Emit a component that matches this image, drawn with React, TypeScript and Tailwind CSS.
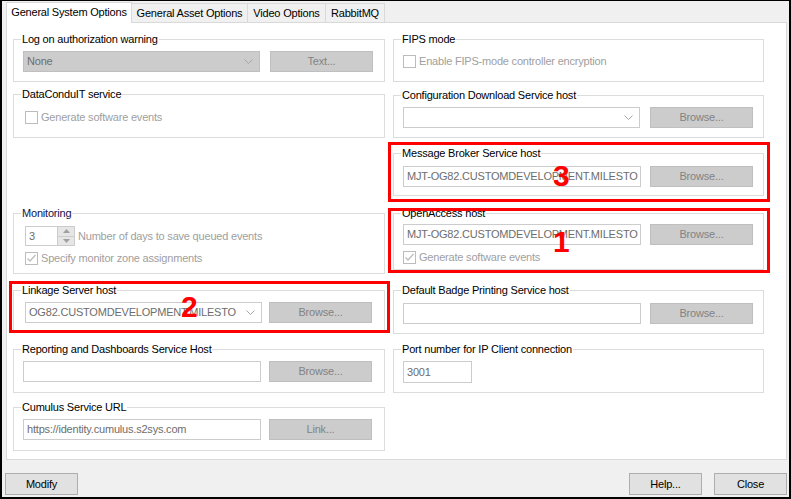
import React from "react";

const FONT = "font-['Liberation_Sans',Arial,sans-serif] text-[11px] tracking-[-0.2px]";

function Group({
  label,
  className = "",
  children,
  labelClass = "text-black",
}: {
  label: string;
  className?: string;
  children?: React.ReactNode;
  labelClass?: string;
}) {
  return (
    <div className={`relative border border-[#dcdcdc] ${className}`}>
      <span className={`absolute left-[7px] top-[-8px] bg-white px-[1px] leading-[14px] whitespace-nowrap ${labelClass}`}>
        {label}
      </span>
      {children}
    </div>
  );
}

function Chevron() {
  return (
    <svg width="9" height="5" viewBox="0 0 9 5" className="shrink-0">
      <polyline points="0.5,0.5 4.5,4.5 8.5,0.5" fill="none" stroke="#a6a6a6" strokeWidth="1" />
    </svg>
  );
}

function Combo({ value, gray = false, w = "w-[237px]" }: { value: string; gray?: boolean; w?: string }) {
  return (
    <div
      className={`${w} h-[21px] flex items-center justify-between pl-[3px] pr-[6px] border ${
        gray ? "bg-[#cccccc] border-[#bfbfbf]" : "bg-white border-[#cccccc]"
      }`}
    >
      <span className="text-[#6d6d6d] whitespace-nowrap overflow-hidden">{value}</span>
      <Chevron />
    </div>
  );
}

function Btn({ label, w = "w-[103px]" }: { label: string; w?: string }) {
  return (
    <div className={`${w} h-[21px] flex items-center justify-center bg-[#cccccc] border border-[#bfbfbf] text-[#838383]`}>
      {label}
    </div>
  );
}

function Field({ value = "", w = "w-[237px]", h = "h-[21px]" }: { value?: string; w?: string; h?: string }) {
  return (
    <div className={`${w} ${h} flex items-center pl-[3px] bg-white border border-[#cccccc] text-[#6d6d6d] whitespace-nowrap overflow-hidden`}>
      {value}
    </div>
  );
}

function Check({ label, checked = false }: { label: string; checked?: boolean }) {
  return (
    <div className="flex items-center h-[13px]">
      <div className="w-[13px] h-[13px] border border-[#bcbcbc] bg-white flex items-center justify-center shrink-0">
        {checked && (
          <svg width="11" height="11" viewBox="0 0 11 11">
            <polyline points="1.5,5.5 4,8 9.5,2" fill="none" stroke="#bcbcbc" strokeWidth="1.3" />
          </svg>
        )}
      </div>
      <span className="ml-[3px] text-[#a0a0a0] whitespace-nowrap leading-[13px]">{label}</span>
    </div>
  );
}

function Spinner() {
  return (
    <div className="flex items-center">
      <div className="w-[33px] h-[20px] border border-[#cccccc] bg-white flex items-center pl-[3px] text-[#6d6d6d]">3</div>
      <div className="w-[17px] h-[20px] border border-[#cccccc] border-l-0 flex flex-col">
        <div className="flex-1 bg-[#e6e6e6] border-b border-[#cccccc] flex items-center justify-center">
          <svg width="7" height="4" viewBox="0 0 7 4">
            <polygon points="0,4 3.5,0 7,4" fill="#a0a0a0" />
          </svg>
        </div>
        <div className="flex-1 bg-[#e6e6e6] flex items-center justify-center">
          <svg width="7" height="4" viewBox="0 0 7 4">
            <polygon points="0,0 3.5,4 7,0" fill="#a0a0a0" />
          </svg>
        </div>
      </div>
      <span className="ml-[3px] text-[#a0a0a0] whitespace-nowrap">Number of days to save queued events</span>
    </div>
  );
}

function Tab({ label, active = false, className = "" }: { label: string; active?: boolean; className?: string }) {
  return (
    <div
      className={`flex items-center justify-center border border-[#d9d9d9] border-b-0 whitespace-nowrap ${
        active ? "h-[21px] bg-white z-10 relative -mb-px pb-[1px]" : "h-[19px] bg-[#f0f0f0] -ml-px"
      } ${className}`}
    >
      {label}
    </div>
  );
}

function BottomBtn({ label, className = "" }: { label: string; className?: string }) {
  return (
    <div className={`w-[73px] h-[22px] flex items-center justify-center bg-[#e1e1e1] border border-[#adadad] text-black ${className}`}>
      {label}
    </div>
  );
}

export default function App() {
  const host = "MJT-OG82.CUSTOMDEVELOPMENT.MILESTO";
  return (
    <div
      className={`${FONT} w-[791px] h-[499px] bg-[#f0f0f0] border-black border-t border-l-2 border-r-2 border-b-2 flex flex-col text-black`}
    >
      {/* tab strip */}
      <div className="flex items-end pl-[4px] mt-[1px] h-[20px]">
        <Tab label="General System Options" active className="w-[126px]" />
        <Tab label="General Asset Options" className="w-[117px]" />
        <Tab label="Video Options" className="w-[79px]" />
        <Tab label="RabbitMQ" className="w-[60px]" />
      </div>

      {/* tab page */}
      <div className="relative ml-[4px] w-[781px] h-[438px] bg-white border border-[#d9d9d9] flex pl-[6px]">
        {/* left column */}
        <div className="flex flex-col w-[372px]">
          <Group label="Log on authorization warning" className="mt-[16px] h-[43px] pt-[11px] pl-[9px]">
            <div className="flex gap-[10px]">
              <Combo value="None" gray />
              <Btn label="Text..." />
            </div>
          </Group>

          <Group label="DataConduIT service" className="mt-[12px] h-[44px] pt-[16px] pl-[11px]">
            <Check label="Generate software events" />
          </Group>

          <Group
            label="Monitoring"
            labelClass="text-[#10104a]"
            className="mt-[75px] h-[61px] pt-[12px] pl-[11px]"
          >
            <Spinner />
            <div className="mt-[6px]">
              <Check label="Specify monitor zone assignments" checked />
            </div>
          </Group>

          <Group label="Linkage Server host" className="mt-[16px] h-[43px] pt-[11px] pl-[11px]">
            <div className="flex gap-[7px]">
              <Combo value="OG82.CUSTOMDEVELOPMENT.MILESTO" w="w-[237px]" />
              <Btn label="Browse..." />
            </div>
          </Group>

          <Group label="Reporting and Dashboards Service Host" className="mt-[16px] h-[44px] pt-[11px] pl-[9px]">
            <div className="flex gap-[8px]">
              <Field w="w-[238px]" />
              <Btn label="Browse..." />
            </div>
          </Group>

          <Group label="Cumulus Service URL" className="mt-[14px] h-[44px] pt-[11px] pl-[9px]">
            <div className="flex gap-[8px]">
              <Field value="https://identity.cumulus.s2sys.com" w="w-[238px]" />
              <Btn label="Link..." />
            </div>
          </Group>
        </div>

        {/* right column */}
        <div className="flex flex-col w-[371px] ml-[8px]">
          <Group label="FIPS mode" className="mt-[16px] h-[43px] pt-[15px] pl-[9px]">
            <Check label="Enable FIPS-mode controller encryption" />
          </Group>

          <Group label="Configuration Download Service host" className="mt-[13px] h-[43px] pt-[11px] pl-[9px]">
            <div className="flex gap-[10px]">
              <Combo value="" />
              <Btn label="Browse..." />
            </div>
          </Group>

          <Group label="Message Broker Service host" className="mt-[15px] h-[43px] pt-[12px] pl-[9px]">
            <div className="flex gap-[9px]">
              <Field value={host} w="w-[238px]" />
              <Btn label="Browse..." />
            </div>
          </Group>

          <Group label="OpenAccess host" className="mt-[17px] h-[57px] pt-[10px] pl-[9px]">
            <div className="flex gap-[9px]">
              <Field value={host} w="w-[238px]" />
              <Btn label="Browse..." />
            </div>
            <div className="mt-[6px]">
              <Check label="Generate software events" checked />
            </div>
          </Group>

          <Group label="Default Badge Printing Service host" className="mt-[20px] h-[44px] pt-[12px] pl-[9px]">
            <div className="flex gap-[9px]">
              <Field w="w-[238px]" />
              <Btn label="Browse..." />
            </div>
          </Group>

          <Group label="Port number for IP Client connection" className="mt-[15px] h-[44px] pt-[11px] pl-[9px]">
            <Field value="3001" w="w-[69px]" h="h-[22px]" />
          </Group>
        </div>

        {/* red annotation overlays */}
        <div className="absolute left-[381px] top-[119px] w-[382px] h-[60px] border-[3px] border-[#ff0000] pointer-events-none" />
        <div className="absolute left-[381px] top-[185px] w-[382px] h-[65px] border-[3px] border-[#ff0000] pointer-events-none" />
        <div className="absolute left-[2px] top-[258px] w-[381px] h-[52px] border-[3px] border-[#ff0000] pointer-events-none" />
        <span className="absolute left-[546px] top-[138px] text-[30px] leading-[30px] font-bold text-[#ff0000] tracking-normal">3</span>
        <span className="absolute left-[546px] top-[204px] text-[30px] leading-[30px] font-bold text-[#ff0000] tracking-normal">1</span>
        <span className="absolute left-[174px] top-[269px] text-[30px] leading-[30px] font-bold text-[#ff0000] tracking-normal">2</span>
      </div>

      {/* bottom buttons */}
      <div className="flex mt-[13px] pl-[3px] pr-[2px]">
        <BottomBtn label="Modify" />
        <div className="flex-1" />
        <BottomBtn label="Help..." />
        <BottomBtn label="Close" className="ml-[12px]" />
      </div>
    </div>
  );
}
